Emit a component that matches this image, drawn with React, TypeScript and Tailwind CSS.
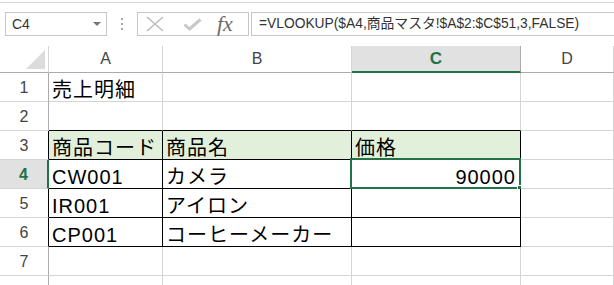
import React from 'react';

type Row = {
  n: number;
  label: string;
  cells: [string, string, string, string];
};

const rows: Row[] = [
  { n: 1, label: '1', cells: ['売上明細', '', '', ''] },
  { n: 2, label: '2', cells: ['', '', '', ''] },
  { n: 3, label: '3', cells: ['商品コード', '商品名', '価格', ''] },
  { n: 4, label: '4', cells: ['CW001', 'カメラ', '90000', ''] },
  { n: 5, label: '5', cells: ['IR001', 'アイロン', '', ''] },
  { n: 6, label: '6', cells: ['CP001', 'コーヒーメーカー', '', ''] },
  { n: 7, label: '7', cells: ['', '', '', ''] },
  // row 8 is cut by the window edge, its number is not visible
  { n: 8, label: '', cells: ['', '', '', ''] },
];

const columns = ['A', 'B', 'C', 'D'];

// table A3:C6 has black borders, row 2 carries its top edge
const inTable = (n: number, col: number) => col < 3 && n >= 3 && n <= 6;

const rowHeaderClass = (n: number) => {
  if (n === 4) return 'border-r-2 border-r-[#217346] bg-[#e1e1e1] font-bold text-[#217346]';
  if (n === 3 || n === 5 || n === 6) return 'border-r border-r-black text-[#444]';
  return 'border-r border-r-[#ababab] text-[#444]';
};

const cellClass = (n: number, col: number) => {
  const right = inTable(n, col) ? 'border-r-black' : 'border-r-[#d4d4d4]';
  const bottom = inTable(n, col) || (n === 2 && col < 3) ? 'border-b-black' : 'border-b-[#d4d4d4]';
  const fill = n === 3 && col < 3 ? 'bg-[#e2efda]' : 'bg-white';
  return `${right} ${bottom} ${fill}`;
};

const NameBox = () => (
  <div className="ml-[5px] flex h-[24px] w-[102px] items-center justify-between border border-[#c6c6c6] pl-[6px] pr-[5px] text-[14px] text-[#333]">
    <span>C4</span>
    <svg width="8" height="4" viewBox="0 0 8 4">
      <polygon points="0,0 8,0 4,4" fill="#777" />
    </svg>
  </div>
);

const FormulaButtons = () => (
  <div className="ml-[14px] flex h-[24px] w-[112px] items-center border border-[#c6c6c6]">
    <svg className="ml-[8px]" width="18" height="16" viewBox="0 0 18 16">
      <path d="M1 1 L17 15 M17 1 L1 15" stroke="#bdbdbd" strokeWidth="1.6" fill="none" />
    </svg>
    <svg className="ml-[19px]" width="19" height="13" viewBox="0 0 19 13">
      <path d="M1.5 6.5 L6.5 11 L17.5 1.5" stroke="#c8c8c8" strokeWidth="3" fill="none" />
    </svg>
    <span className="ml-[15px] font-['Liberation_Serif',serif] text-[22px] italic leading-none text-[#6b6b6b]">fx</span>
  </div>
);

export default function App() {
  return (
    <div className="h-[285px] w-[614px] overflow-hidden bg-white font-['Liberation_Sans','Noto_Sans_CJK_JP',sans-serif]">
      <div className="h-[2px]" />
      <div className="h-px bg-[#d5d5d5]" />

      {/* formula bar */}
      <div className="flex h-[43px] items-start pt-[9px]">
        <NameBox />
        <div className="ml-[14px] flex h-[24px] w-[2px] flex-col justify-center gap-[3px]">
          <div className="h-[2px] w-[2px] bg-[#a6a6a6]" />
          <div className="h-[2px] w-[2px] bg-[#a6a6a6]" />
          <div className="h-[2px] w-[2px] bg-[#a6a6a6]" />
        </div>
        <FormulaButtons />
        <div className="ml-[2px] flex h-[24px] flex-1 items-center border-y border-l border-[#c6c6c6] pl-[7px] text-[13.8px] whitespace-nowrap text-[#333]">
          =VLOOKUP($A4,商品マスタ!$A$2:$C$51,3,FALSE)
        </div>
      </div>

      {/* sheet */}
      <div className="grid grid-cols-[49px_114px_189px_169px_1fr] grid-rows-[27px_repeat(8,29px)]">
        <div className="flex items-end justify-end border-r border-b border-r-[#d5d5d5] border-b-[#ababab] pr-[3px] pb-[3px]">
          <svg width="19" height="19" viewBox="0 0 19 19">
            <polygon points="19,0 19,19 0,19" fill="#dcdcdc" />
          </svg>
        </div>
        {columns.map((c) => (
          <div
            key={c}
            className={
              c === 'C'
                ? 'flex items-center justify-center border-r border-b-2 border-r-[#ababab] border-b-[#217346] bg-[#e1e1e1] text-[17px] font-bold text-[#217346]'
                : 'flex items-center justify-center border-r border-b border-r-[#d5d5d5] border-b-[#ababab] text-[16px] text-[#444]'
            }
          >
            {c}
          </div>
        ))}

        {rows.map((row) => (
          <React.Fragment key={row.n}>
            <div
              className={`flex items-center justify-center border-b border-b-[#d5d5d5] pt-[2px] text-[16px] ${rowHeaderClass(row.n)}`}
            >
              {row.label}
            </div>
            {row.cells.map((text, col) => {
              const selected = row.n === 4 && col === 2;
              return (
                <div
                  key={col}
                  className={`relative flex items-end overflow-visible border-r border-b pb-[1px] text-[20px] leading-none whitespace-nowrap text-black ${
                    selected ? 'justify-end pr-[4px]' : 'pl-[3px]'
                  } ${cellClass(row.n, col)}`}
                >
                  <span className="tracking-[1px]">{text}</span>
                  {selected && (
                    <>
                      <div className="absolute -top-[2px] -left-[2px] right-[-1px] bottom-[-1px] border-2 border-[#217346]" />
                      <div className="absolute right-[-4px] bottom-[-4px] h-[7px] w-[7px] border border-white bg-[#217346]" />
                    </>
                  )}
                </div>
              );
            })}
          </React.Fragment>
        ))}
      </div>
    </div>
  );
}
